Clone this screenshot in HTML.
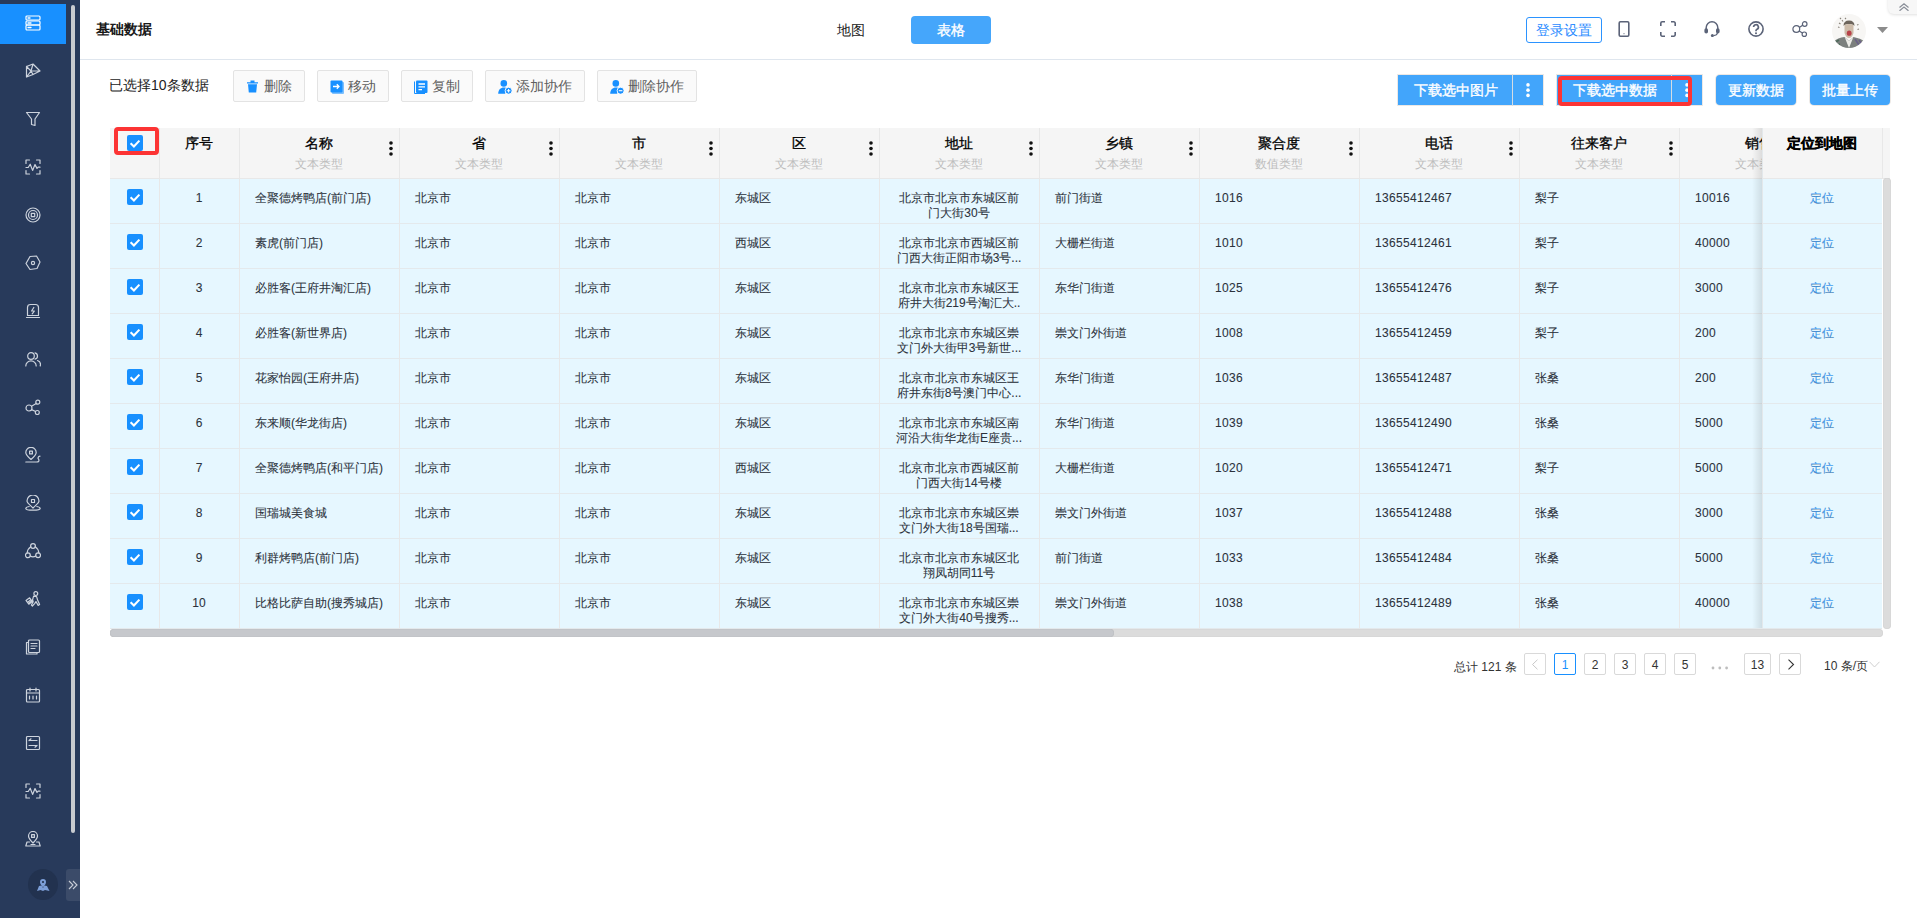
<!DOCTYPE html>
<html><head><meta charset="utf-8">
<style>
*{box-sizing:border-box;margin:0;padding:0}
html,body{width:1917px;height:918px;overflow:hidden;background:#fff}
body{position:relative;font-family:"Liberation Sans",sans-serif;color:#333;font-size:12px}
.a{position:absolute}
#side{position:absolute;left:0;top:0;width:80px;height:918px;background:#283a5b}
#side .act{position:absolute;left:0;top:4px;width:66px;height:40px;background:#1890ff}
#side .sb{position:absolute;left:71px;top:5px;width:4px;height:828px;border-radius:2px;background:#c8cbd0}
#side svg.ic{position:absolute;left:25px;width:16px;height:16px;fill:none;stroke:#c9d0dc;stroke-width:1.2;stroke-linecap:round;stroke-linejoin:round}
#hdr{position:absolute;left:80px;top:0;width:1837px;height:60px;border-bottom:1px solid #dfe6ee;background:#fff}
.title{position:absolute;left:96px;top:20px;font-size:14px;font-weight:bold;color:#1a1a1a;line-height:18px}
.tog1{position:absolute;left:837px;top:21px;font-size:14px;line-height:18px;color:#222}
.tog2{position:absolute;left:911px;top:16px;width:80px;height:28px;background:#45a6fb;border-radius:4px;color:#fff;font-size:14px;line-height:28px;text-align:center;font-weight:500;-webkit-text-stroke:0.35px #fff}
.login{position:absolute;left:1526px;top:17px;width:76px;height:26px;border:1px solid #2b93ff;border-radius:3px;color:#2b8bff;font-size:14px;line-height:24px;text-align:center}
.hic{position:absolute;top:21px;width:16px;height:16px;fill:none;stroke:#5b6378;stroke-width:1.6}
.sel{position:absolute;left:109px;top:76px;font-size:14px;line-height:18px;color:#222}
.tb{position:absolute;top:70px;height:32px;border:1px solid #e3e3e3;border-radius:2px;background:#fafafa;color:#5f5f5f;font-size:14px;line-height:30px}
.tb svg{position:absolute;top:9px;left:12px}
.tb span{position:absolute;top:0}
.bb{position:absolute;top:75px;height:30px;background:#42a5fb;box-shadow:0 0 0 1px rgba(200,190,180,0.35);color:#fff;font-size:14px;line-height:30px;text-align:center;font-weight:500;-webkit-text-stroke:0.35px #fff}
.bb .dv{position:absolute;top:-1px;width:1px;height:32px;background:#d6dde3}
#tbl{position:absolute;left:110px;top:128px;width:1780px;height:510px}
.hd{position:absolute;left:110px;top:128px;width:1780px;height:51px;background:#f5f5f5;border-bottom:1px solid #e8e8e8}
.bd{position:absolute;left:110px;top:179px;width:1772px;height:450px;background:#e6f7ff}
.ht{position:absolute;top:135px;height:16px;font-size:14px;line-height:16px;font-weight:500;text-align:center;color:#000;-webkit-text-stroke:0.3px #000}
.hs{position:absolute;top:156px;height:16px;font-size:12px;line-height:16px;text-align:center;color:#bdbdbd}
.kb{position:absolute;top:141px;width:4px;height:16px;fill:#111}
.kb svg{display:block}
.cb{position:absolute;width:16px;height:16px}
.cb svg{display:block}
.td{position:absolute;padding-top:13px;font-size:12px;line-height:15px;color:#2c323c;white-space:nowrap;-webkit-text-stroke:0.08px #2c323c}
.td.c{text-align:center}
.n{letter-spacing:0.33px}
.td.addr{text-align:center;padding-top:13px}
.loc{color:#40a0f8}
.vl{position:absolute;top:128px;width:1px;height:500px;background:#e8e8e8}
.hl{position:absolute;left:110px;width:1772px;height:1px;background:#e4e9ec}
.fix{position:absolute;left:1762px;top:128px;width:120px;height:500px}
.pg{position:absolute;top:653px;width:22px;height:22px;border:1px solid #d9d9d9;border-radius:2px;font-size:12px;line-height:23px;text-align:center;color:#333;background:#fff}
</style></head><body>
<div id="side">
  <div class="act"></div>
  <div class="sb"></div>
<svg class="ic" viewBox="0 0 16 16" style="top:15px;stroke:#ffffff"><rect x="1" y="1" width="14" height="4" rx="1"/><rect x="1" y="6" width="14" height="4" rx="1"/><rect x="1" y="10" width="14" height="5" rx="1"/><path d="M3 3h2M3 8h3M3 12.5h3" stroke-width="1.3"/></svg>
<svg class="ic" viewBox="0 0 16 16" style="top:63px;stroke:#cdd3dd"><path d="M1.5 3.5 L8 1 L15 8 L8 11.5 L1.5 14 Z M1.5 3.5 L6 8 L15 8 M8 1 L6 8 L1.5 14 M6 8 L8 11.5"/></svg>
<svg class="ic" viewBox="0 0 16 16" style="top:111px;stroke:#cdd3dd"><path d="M1.5 1.5 H14.5 L10 8 V14.5 L6.5 13.5 V8 Z"/></svg>
<svg class="ic" viewBox="0 0 16 16" style="top:159px;stroke:#cdd3dd"><path d="M1 4.5V1h3.5M11.5 1H15v3.5M15 11.5V15h-3.5M4.5 15H1v-3.5M1 8.5H3.2L5.2 5.2L7.6 11.4L10 5.6L12 9.4L13.2 8.2H15"/></svg>
<svg class="ic" viewBox="0 0 16 16" style="top:207px;stroke:#cdd3dd"><circle cx="8" cy="8" r="7"/><circle cx="8" cy="8" r="4.5"/><rect x="6.3" y="6.3" width="3.4" height="3.4"/></svg>
<svg class="ic" viewBox="0 0 16 16" style="top:255px;stroke:#cdd3dd"><path d="M5 1.5 L11.5 1 L15 7 L12 13.5 L5 14.5 L1 8.5 Z"/><circle cx="8" cy="8" r="1.6"/></svg>
<svg class="ic" viewBox="0 0 16 16" style="top:303px;stroke:#cdd3dd"><path d="M2.5 12.5 V4.5 Q2.5 1.5 5.5 1.5 H10.5 Q13.5 1.5 13.5 4.5 V12.5 Z M1.5 14.5 H14.5 M8.8 4.5 L6.6 8 H9.4 L7.2 10.8"/></svg>
<svg class="ic" viewBox="0 0 16 16" style="top:351px;stroke:#cdd3dd"><circle cx="6" cy="5" r="3.3"/><path d="M0.8 15 a5.2 5.2 0 0 1 10.4 0 M10 1.8 a3.3 3.3 0 0 1 0 6.4 M12.5 9.5 a4.5 4.5 0 0 1 2.7 5.5"/></svg>
<svg class="ic" viewBox="0 0 16 16" style="top:399px;stroke:#cdd3dd"><circle cx="4" cy="9" r="3"/><circle cx="12.8" cy="3.2" r="2"/><circle cx="12.3" cy="13.5" r="2"/><path d="M6.5 7.3 L11.2 4.4 M6.6 10.6 L10.6 12.5"/></svg>
<svg class="ic" viewBox="0 0 16 16" style="top:447px;stroke:#cdd3dd"><path d="M6 12.5 C2.5 9.5 0.8 7.5 0.8 5.5 a5.2 5.2 0 0 1 10.4 0 C11.2 7.5 9.5 9.5 6 12.5 Z"/><rect x="4.6" y="4.1" width="2.8" height="2.8"/><path d="M0.8 15 H11.5 C14 15 14.5 13.5 13.5 12.2 C12.6 11 13 9.6 15 9.2"/></svg>
<svg class="ic" viewBox="0 0 16 16" style="top:495px;stroke:#cdd3dd"><path d="M8 13 C5 10 2 7.8 2 6 a6 6 0 0 1 12 0 C14 7.8 11 10 8 13 Z"/><rect x="6.5" y="4.5" width="3" height="3"/><path d="M4.2 11.5 C1.5 12 0.8 12.8 0.8 13.4 C0.8 14.5 4 15.2 8 15.2 C12 15.2 15.2 14.5 15.2 13.4 C15.2 12.8 14.5 12 11.8 11.5"/></svg>
<svg class="ic" viewBox="0 0 16 16" style="top:543px;stroke:#cdd3dd"><circle cx="8" cy="3" r="2.4"/><circle cx="2.9" cy="12.3" r="2.4"/><circle cx="13.1" cy="12.3" r="2.4"/><path d="M5.8 3.8 Q2.6 5.8 2.2 9.9 M10.2 3.8 Q13.4 5.8 13.8 9.9 M5.3 12.9 Q8 14.8 10.7 12.9"/></svg>
<svg class="ic" viewBox="0 0 16 16" style="top:591px;stroke:#cdd3dd"><circle cx="10.8" cy="2.6" r="1.9"/><path d="M8.6 5.2 L11.6 5.6 L12.6 9 L14.6 13.6 L13.2 14.4 L11 10.6 L9.6 12.6 L7.4 15 L6.4 14 L8.2 10.8 L7.6 8.6 Z M1 9.4 L4.6 6.8 L7.4 10.6 L3.8 13.2 Z M2.6 11.4 L5.2 9.2 M3.6 12.4 L6.2 10.2"/></svg>
<svg class="ic" viewBox="0 0 16 16" style="top:639px;stroke:#cdd3dd"><rect x="3.5" y="1" width="11" height="12.5" rx="1"/><path d="M3.5 3.5 H1.5 V15 H12 V13.5 M6 4.5 H12 M6 7 H12 M6 9.5 H10"/></svg>
<svg class="ic" viewBox="0 0 16 16" style="top:687px;stroke:#cdd3dd"><rect x="1.5" y="2.5" width="13" height="12.5" rx="1"/><path d="M1.5 6 H14.5 M5 1 V4 M11 1 V4 M4.5 9 V12 M8 9 V12 M11.5 9 V12"/></svg>
<svg class="ic" viewBox="0 0 16 16" style="top:735px;stroke:#cdd3dd"><rect x="1.5" y="1.5" width="13" height="13" rx="1"/><path d="M4 5.5 H12 M4 5.5 L6 3.8 M12 10.5 H4 M12 10.5 L10 12.2"/></svg>
<svg class="ic" viewBox="0 0 16 16" style="top:783px;stroke:#cdd3dd"><path d="M1 4.5V1h3.5M11.5 1H15v3.5M15 11.5V15h-3.5M4.5 15H1v-3.5M1 8.5H3.2L5.2 5.2L7.6 11.4L10 5.6L12 9.4L13.2 8.2H15"/></svg>
<svg class="ic" viewBox="0 0 16 16" style="top:831px;stroke:#cdd3dd"><path d="M8 12 C5 9 3.5 7.5 3.5 5 a4.5 4.5 0 0 1 9 0 C12.5 7.5 11 9 8 12 Z"/><rect x="6.6" y="3.6" width="2.8" height="2.8"/><path d="M4.5 11 H2 L0.8 15 H15.2 L14 11 H11.5 M6 13.5 H10"/></svg>
<div style="position:absolute;left:28px;top:869px;width:30px;height:31px;border-radius:50%;background:#22324f"></div>
<svg viewBox="0 0 16 16" style="position:absolute;left:35px;top:877px;width:16px;height:16px"><path d="M2 14 L4 9 L6.5 8.5 L8 11 L9.5 8.5 L12 9 L14.5 14 L10 13 L8 14 L5.5 13 Z" fill="#7d9fd8"/><path d="M8 10.5 C6 8 5 6.8 5 5 a3 3 0 0 1 6 0 C11 6.8 10 8 8 10.5 Z" fill="#7d9fd8"/><circle cx="8" cy="5" r="1.1" fill="#22324f"/></svg>
<div style="position:absolute;left:66px;top:869px;width:14px;height:32px;border-radius:3px 0 0 3px;background:#3b4b69"></div>
<svg viewBox="0 0 10 10" style="position:absolute;left:68px;top:880px;width:10px;height:10px;fill:none;stroke:#c9ced8;stroke-width:1.1"><path d="M1 1 L5 5 L1 9 M5 1 L9 5 L5 9"/></svg>
</div>
<div id="hdr"></div>
<div class="title">基础数据</div>
<div class="tog1">地图</div>
<div class="tog2">表格</div>
<div class="login">登录设置</div>
<svg class="hic" viewBox="0 0 16 16" style="left:1616px"><rect x="3.2" y="0.8" width="9.6" height="14.4" rx="1.2"/><path d="M7.6 12.6h0.8" stroke-width="1.4"/></svg>
<svg class="hic" viewBox="0 0 16 16" style="left:1660px"><path d="M0.8 5V2.2a1.4 1.4 0 0 1 1.4-1.4H5M11 0.8h2.8a1.4 1.4 0 0 1 1.4 1.4V5M15.2 11v2.8a1.4 1.4 0 0 1-1.4 1.4H11M5 15.2H2.2a1.4 1.4 0 0 1-1.4-1.4V11"/></svg>
<svg class="hic" viewBox="0 0 16 16" style="left:1704px"><path d="M2.2 9.5V6.6a5.8 5.8 0 0 1 11.6 0v2.9" stroke-width="1.45"/><rect x="0.4" y="7.2" width="3.6" height="5.4" rx="1.8" fill="#5b6378" stroke="none"/><rect x="12" y="7.2" width="3.6" height="5.4" rx="1.8" fill="#5b6378" stroke="none"/><path d="M13.4 12 Q13 14.4 9.6 14.6" stroke-width="1.3"/><circle cx="8.4" cy="14.6" r="1.5" fill="#5b6378" stroke="none"/></svg>
<svg class="hic" viewBox="0 0 16 16" style="left:1748px"><circle cx="8" cy="8" r="7.1"/><path d="M5.6 6.1a2.4 2.4 0 1 1 3.4 2.2c-0.7 0.35-1 0.8-1 1.5v0.4" stroke-width="1.7"/><circle cx="8" cy="12.3" r="1" fill="#5b6378" stroke="none"/></svg>
<svg class="hic" viewBox="0 0 16 16" style="left:1792px;stroke-width:1.2"><circle cx="4.3" cy="8" r="3.4"/><circle cx="12.7" cy="3" r="2.3"/><circle cx="12.3" cy="13.2" r="2.2"/><path d="M7.3 6.5L10.6 4.2M7.1 9.9L10.5 12"/></svg>
<svg class="a" viewBox="0 0 11 6" style="left:1877px;top:27px;width:11px;height:6px"><path d="M0 0H11L5.5 6Z" fill="#8c8c8c"/></svg>
<div class="a" style="left:1888px;top:-4px;width:34px;height:18px;background:#f7f7f7;border-radius:0 0 0 6px;box-shadow:0 1px 3px rgba(0,0,0,0.12)"></div>
<svg class="a" viewBox="0 0 10 8" style="left:1899px;top:2.5px;width:10px;height:8px;fill:none;stroke:#8a8f99;stroke-width:1.25"><path d="M0.5 4.5L5 0.8L9.5 4.5M0.5 7.8L5 4.1L9.5 7.8"/></svg>
<svg class="a" viewBox="0 0 34 34" style="left:1832px;top:14px;width:34px;height:34px"><defs><clipPath id="avc"><circle cx="17" cy="17" r="17"/></clipPath><filter id="blr"><feGaussianBlur stdDeviation="0.6"/></filter></defs>
<g clip-path="url(#avc)"><rect width="34" height="34" fill="#f7f6f4"/><g filter="url(#blr)">
<path d="M7 9 l1.5 1 M10 6 l1 1.5 M8 4 l1 1 M6 13 l1.5 0.5 M25 11 l1.5 -0.5 M27 15 l-1.5 0.5 M13 4 l1 1" stroke="#8a847c" stroke-width="1.1"/>
<path d="M11.5 12 Q11.5 6.5 17 6.5 Q22.5 6.5 22.5 12 L21.5 11 Q17 9 12.5 11 Z" fill="#6d655b"/>
<path d="M12.5 11 Q17 9 21.5 11 L21.5 19 Q20 24 17 24 Q14 24 12.5 19 Z" fill="#cdbcaa"/>
<ellipse cx="17.2" cy="19.2" rx="2.4" ry="2.6" fill="#b8424a"/>
<path d="M0 34 L1 28 Q6 23.5 12.5 23 L17 27 L21.5 23 Q28 24 34 28 V34 Z" fill="#7b807e"/>
<path d="M12.8 23.5 L17 34 L21.2 23.5 L17 27 Z" fill="#ecebe7"/>
<path d="M2 29 l5 -3 M4 32 l4 -2" stroke="#4f6a5c" stroke-width="1.8"/><path d="M23 25 l4 6 M27 26 l3 4" stroke="#6c6288" stroke-width="1.6"/>
</g></g></svg>

<div class="sel">已选择10条数据</div>
<div class="tb" style="left:233px;width:72px"><svg width="13" height="13" viewBox="0 0 13 13"><path d="M1 2.2H12V3.6H1Z M4.5 0.5H8.5V2.2H4.5Z" fill="#1890ff"/><path d="M2 4.2H11L10.2 12.5H2.8Z" fill="#1890ff"/></svg><span style="left:30px">删除</span></div>
<div class="tb" style="left:317px;width:72px"><svg width="14" height="14" viewBox="0 0 14 14"><rect x="2" y="2" width="12" height="12" rx="1" fill="#1890ff" opacity="0.55"/><rect x="0.5" y="0.5" width="12" height="12" rx="1" fill="#1890ff"/><path d="M3 6.5H9M6.8 4.3L9 6.5L6.8 8.7" stroke="#fff" stroke-width="1.3" fill="none"/></svg><span style="left:30px">移动</span></div>
<div class="tb" style="left:401px;width:72px"><svg width="14" height="14" viewBox="0 0 14 14"><path d="M0.5 1.5V13.5H11" stroke="#1890ff" stroke-width="1" fill="none"/><rect x="2" y="0.5" width="11.5" height="12.5" rx="1" fill="#1890ff"/><path d="M4.5 4H11M4.5 6.8H11M4.5 9.6H8" stroke="#fff" stroke-width="1.3"/></svg><span style="left:30px">复制</span></div>
<div class="tb" style="left:485px;width:100px"><svg width="14" height="14" viewBox="0 0 14 14"><circle cx="5.8" cy="3.4" r="3.3" fill="#1890ff"/><path d="M0.2 13.8C0.2 9.6 2.8 7.4 5.8 7.4C7.3 7.4 8.4 7.8 9.2 8.3C7.7 9.2 7 10.8 7.2 13.8Z" fill="#1890ff"/><circle cx="10.6" cy="10.7" r="3.5" fill="#1890ff" stroke="#fff" stroke-width="0.9"/><path d="M8.8 10.7H12.4M10.6 8.9V12.5" stroke="#fff" stroke-width="1.1"/></svg><span style="left:30px">添加协作</span></div>
<div class="tb" style="left:597px;width:100px"><svg width="14" height="14" viewBox="0 0 14 14"><circle cx="5.8" cy="3.4" r="3.3" fill="#1890ff"/><path d="M0.2 13.8C0.2 9.6 2.8 7.4 5.8 7.4C7.3 7.4 8.4 7.8 9.2 8.3C7.7 9.2 7 10.8 7.2 13.8Z" fill="#1890ff"/><circle cx="10.6" cy="10.7" r="3.5" fill="#1890ff" stroke="#fff" stroke-width="0.9"/><path d="M8.8 10.7H12.4" stroke="#fff" stroke-width="1.1"/></svg><span style="left:30px">删除协作</span></div>

<div class="bb" style="left:1398px;width:145px"><span class="a" style="left:16px;top:0">下载选中图片</span><div class="dv" style="left:114px"></div><svg class="a" viewBox="0 0 4 16" style="left:128px;top:8px;width:4px;height:15px"><circle cx="2" cy="2" r="1.9" fill="#fff"/><circle cx="2" cy="7.6" r="1.9" fill="#fff"/><circle cx="2" cy="13.2" r="1.9" fill="#fff"/></svg></div>
<div class="bb" style="left:1557px;width:145px"><span class="a" style="left:16px;top:0">下载选中数据</span><div class="dv" style="left:114px"></div><svg class="a" viewBox="0 0 4 16" style="left:128px;top:8px;width:4px;height:15px"><circle cx="2" cy="2" r="1.9" fill="#fff"/><circle cx="2" cy="7.6" r="1.9" fill="#fff"/><circle cx="2" cy="13.2" r="1.9" fill="#fff"/></svg></div>
<div class="bb" style="left:1716px;width:80px;border-radius:4px">更新数据</div>
<div class="bb" style="left:1810px;width:80px;border-radius:4px">批量上传</div>
<div class="a" style="left:1558px;top:76px;width:134px;height:30px;border:4px solid #fc3434;border-radius:4px"></div>

<div class="hd"></div>
<div class="bd"></div>
<div class="vl" style="left:159px"></div>
<div class="vl" style="left:239px"></div>
<div class="vl" style="left:399px"></div>
<div class="vl" style="left:559px"></div>
<div class="vl" style="left:719px"></div>
<div class="vl" style="left:879px"></div>
<div class="vl" style="left:1039px"></div>
<div class="vl" style="left:1199px"></div>
<div class="vl" style="left:1359px"></div>
<div class="vl" style="left:1519px"></div>
<div class="vl" style="left:1679px"></div>
<div class="hl" style="top:223px"></div>
<div class="hl" style="top:268px"></div>
<div class="hl" style="top:313px"></div>
<div class="hl" style="top:358px"></div>
<div class="hl" style="top:403px"></div>
<div class="hl" style="top:448px"></div>
<div class="hl" style="top:493px"></div>
<div class="hl" style="top:538px"></div>
<div class="hl" style="top:583px"></div>
<div class="hl" style="top:628px"></div>
<div class="cb" style="left:127px;top:135px"><svg width="16" height="16" viewBox="0 0 16 16"><rect x="0" y="0" width="16" height="16" rx="2" fill="#1890ff"/><path d="M3.6 8.3 L6.9 11.4 L12.4 5.6" stroke="#fff" stroke-width="2.1" fill="none" stroke-linecap="butt" stroke-linejoin="miter"/></svg></div>
<div class="ht" style="left:159px;width:80px">序号</div>
<div class="ht" style="left:239px;width:160px">名称</div>
<div class="hs" style="left:239px;width:160px">文本类型</div>
<div class="kb" style="left:389px"><svg width="4" height="16" viewBox="0 0 4 16"><circle cx="2" cy="2" r="1.8"/><circle cx="2" cy="7.5" r="1.8"/><circle cx="2" cy="13" r="1.8"/></svg></div>
<div class="ht" style="left:399px;width:160px">省</div>
<div class="hs" style="left:399px;width:160px">文本类型</div>
<div class="kb" style="left:549px"><svg width="4" height="16" viewBox="0 0 4 16"><circle cx="2" cy="2" r="1.8"/><circle cx="2" cy="7.5" r="1.8"/><circle cx="2" cy="13" r="1.8"/></svg></div>
<div class="ht" style="left:559px;width:160px">市</div>
<div class="hs" style="left:559px;width:160px">文本类型</div>
<div class="kb" style="left:709px"><svg width="4" height="16" viewBox="0 0 4 16"><circle cx="2" cy="2" r="1.8"/><circle cx="2" cy="7.5" r="1.8"/><circle cx="2" cy="13" r="1.8"/></svg></div>
<div class="ht" style="left:719px;width:160px">区</div>
<div class="hs" style="left:719px;width:160px">文本类型</div>
<div class="kb" style="left:869px"><svg width="4" height="16" viewBox="0 0 4 16"><circle cx="2" cy="2" r="1.8"/><circle cx="2" cy="7.5" r="1.8"/><circle cx="2" cy="13" r="1.8"/></svg></div>
<div class="ht" style="left:879px;width:160px">地址</div>
<div class="hs" style="left:879px;width:160px">文本类型</div>
<div class="kb" style="left:1029px"><svg width="4" height="16" viewBox="0 0 4 16"><circle cx="2" cy="2" r="1.8"/><circle cx="2" cy="7.5" r="1.8"/><circle cx="2" cy="13" r="1.8"/></svg></div>
<div class="ht" style="left:1039px;width:160px">乡镇</div>
<div class="hs" style="left:1039px;width:160px">文本类型</div>
<div class="kb" style="left:1189px"><svg width="4" height="16" viewBox="0 0 4 16"><circle cx="2" cy="2" r="1.8"/><circle cx="2" cy="7.5" r="1.8"/><circle cx="2" cy="13" r="1.8"/></svg></div>
<div class="ht" style="left:1199px;width:160px">聚合度</div>
<div class="hs" style="left:1199px;width:160px">数值类型</div>
<div class="kb" style="left:1349px"><svg width="4" height="16" viewBox="0 0 4 16"><circle cx="2" cy="2" r="1.8"/><circle cx="2" cy="7.5" r="1.8"/><circle cx="2" cy="13" r="1.8"/></svg></div>
<div class="ht" style="left:1359px;width:160px">电话</div>
<div class="hs" style="left:1359px;width:160px">文本类型</div>
<div class="kb" style="left:1509px"><svg width="4" height="16" viewBox="0 0 4 16"><circle cx="2" cy="2" r="1.8"/><circle cx="2" cy="7.5" r="1.8"/><circle cx="2" cy="13" r="1.8"/></svg></div>
<div class="ht" style="left:1519px;width:160px">往来客户</div>
<div class="hs" style="left:1519px;width:160px">文本类型</div>
<div class="kb" style="left:1669px"><svg width="4" height="16" viewBox="0 0 4 16"><circle cx="2" cy="2" r="1.8"/><circle cx="2" cy="7.5" r="1.8"/><circle cx="2" cy="13" r="1.8"/></svg></div>
<div class="ht" style="left:1679px;width:160px">销售</div>
<div class="hs" style="left:1679px;width:160px">文本类型</div>
<div class="kb" style="left:1829px"><svg width="4" height="16" viewBox="0 0 4 16"><circle cx="2" cy="2" r="1.8"/><circle cx="2" cy="7.5" r="1.8"/><circle cx="2" cy="13" r="1.8"/></svg></div>
<div class="cb" style="left:127px;top:189px"><svg width="16" height="16" viewBox="0 0 16 16"><rect x="0" y="0" width="16" height="16" rx="2" fill="#1890ff"/><path d="M3.6 8.3 L6.9 11.4 L12.4 5.6" stroke="#fff" stroke-width="2.1" fill="none" stroke-linecap="butt" stroke-linejoin="miter"/></svg></div>
<div class="td c" style="left:159px;width:80px;top:178px">1</div>
<div class="td" style="left:255px;top:178px">全聚德烤鸭店(前门店)</div>
<div class="td" style="left:415px;top:178px">北京市</div>
<div class="td" style="left:575px;top:178px">北京市</div>
<div class="td" style="left:735px;top:178px">东城区</div>
<div class="td addr" style="left:879px;width:160px;top:178px">北京市北京市东城区前<br>门大街30号</div>
<div class="td" style="left:1055px;top:178px">前门街道</div>
<div class="td n" style="left:1215px;top:178px">1016</div>
<div class="td n" style="left:1375px;top:178px">13655412467</div>
<div class="td" style="left:1535px;top:178px">梨子</div>
<div class="td n" style="left:1695px;top:178px">10016</div>
<div class="cb" style="left:127px;top:234px"><svg width="16" height="16" viewBox="0 0 16 16"><rect x="0" y="0" width="16" height="16" rx="2" fill="#1890ff"/><path d="M3.6 8.3 L6.9 11.4 L12.4 5.6" stroke="#fff" stroke-width="2.1" fill="none" stroke-linecap="butt" stroke-linejoin="miter"/></svg></div>
<div class="td c" style="left:159px;width:80px;top:223px">2</div>
<div class="td" style="left:255px;top:223px">素虎(前门店)</div>
<div class="td" style="left:415px;top:223px">北京市</div>
<div class="td" style="left:575px;top:223px">北京市</div>
<div class="td" style="left:735px;top:223px">西城区</div>
<div class="td addr" style="left:879px;width:160px;top:223px">北京市北京市西城区前<br>门西大街正阳市场3号...</div>
<div class="td" style="left:1055px;top:223px">大栅栏街道</div>
<div class="td n" style="left:1215px;top:223px">1010</div>
<div class="td n" style="left:1375px;top:223px">13655412461</div>
<div class="td" style="left:1535px;top:223px">梨子</div>
<div class="td n" style="left:1695px;top:223px">40000</div>
<div class="cb" style="left:127px;top:279px"><svg width="16" height="16" viewBox="0 0 16 16"><rect x="0" y="0" width="16" height="16" rx="2" fill="#1890ff"/><path d="M3.6 8.3 L6.9 11.4 L12.4 5.6" stroke="#fff" stroke-width="2.1" fill="none" stroke-linecap="butt" stroke-linejoin="miter"/></svg></div>
<div class="td c" style="left:159px;width:80px;top:268px">3</div>
<div class="td" style="left:255px;top:268px">必胜客(王府井淘汇店)</div>
<div class="td" style="left:415px;top:268px">北京市</div>
<div class="td" style="left:575px;top:268px">北京市</div>
<div class="td" style="left:735px;top:268px">东城区</div>
<div class="td addr" style="left:879px;width:160px;top:268px">北京市北京市东城区王<br>府井大街219号淘汇大..</div>
<div class="td" style="left:1055px;top:268px">东华门街道</div>
<div class="td n" style="left:1215px;top:268px">1025</div>
<div class="td n" style="left:1375px;top:268px">13655412476</div>
<div class="td" style="left:1535px;top:268px">梨子</div>
<div class="td n" style="left:1695px;top:268px">3000</div>
<div class="cb" style="left:127px;top:324px"><svg width="16" height="16" viewBox="0 0 16 16"><rect x="0" y="0" width="16" height="16" rx="2" fill="#1890ff"/><path d="M3.6 8.3 L6.9 11.4 L12.4 5.6" stroke="#fff" stroke-width="2.1" fill="none" stroke-linecap="butt" stroke-linejoin="miter"/></svg></div>
<div class="td c" style="left:159px;width:80px;top:313px">4</div>
<div class="td" style="left:255px;top:313px">必胜客(新世界店)</div>
<div class="td" style="left:415px;top:313px">北京市</div>
<div class="td" style="left:575px;top:313px">北京市</div>
<div class="td" style="left:735px;top:313px">东城区</div>
<div class="td addr" style="left:879px;width:160px;top:313px">北京市北京市东城区崇<br>文门外大街甲3号新世...</div>
<div class="td" style="left:1055px;top:313px">崇文门外街道</div>
<div class="td n" style="left:1215px;top:313px">1008</div>
<div class="td n" style="left:1375px;top:313px">13655412459</div>
<div class="td" style="left:1535px;top:313px">梨子</div>
<div class="td n" style="left:1695px;top:313px">200</div>
<div class="cb" style="left:127px;top:369px"><svg width="16" height="16" viewBox="0 0 16 16"><rect x="0" y="0" width="16" height="16" rx="2" fill="#1890ff"/><path d="M3.6 8.3 L6.9 11.4 L12.4 5.6" stroke="#fff" stroke-width="2.1" fill="none" stroke-linecap="butt" stroke-linejoin="miter"/></svg></div>
<div class="td c" style="left:159px;width:80px;top:358px">5</div>
<div class="td" style="left:255px;top:358px">花家怡园(王府井店)</div>
<div class="td" style="left:415px;top:358px">北京市</div>
<div class="td" style="left:575px;top:358px">北京市</div>
<div class="td" style="left:735px;top:358px">东城区</div>
<div class="td addr" style="left:879px;width:160px;top:358px">北京市北京市东城区王<br>府井东街8号澳门中心...</div>
<div class="td" style="left:1055px;top:358px">东华门街道</div>
<div class="td n" style="left:1215px;top:358px">1036</div>
<div class="td n" style="left:1375px;top:358px">13655412487</div>
<div class="td" style="left:1535px;top:358px">张桑</div>
<div class="td n" style="left:1695px;top:358px">200</div>
<div class="cb" style="left:127px;top:414px"><svg width="16" height="16" viewBox="0 0 16 16"><rect x="0" y="0" width="16" height="16" rx="2" fill="#1890ff"/><path d="M3.6 8.3 L6.9 11.4 L12.4 5.6" stroke="#fff" stroke-width="2.1" fill="none" stroke-linecap="butt" stroke-linejoin="miter"/></svg></div>
<div class="td c" style="left:159px;width:80px;top:403px">6</div>
<div class="td" style="left:255px;top:403px">东来顺(华龙街店)</div>
<div class="td" style="left:415px;top:403px">北京市</div>
<div class="td" style="left:575px;top:403px">北京市</div>
<div class="td" style="left:735px;top:403px">东城区</div>
<div class="td addr" style="left:879px;width:160px;top:403px">北京市北京市东城区南<br>河沿大街华龙街E座贵...</div>
<div class="td" style="left:1055px;top:403px">东华门街道</div>
<div class="td n" style="left:1215px;top:403px">1039</div>
<div class="td n" style="left:1375px;top:403px">13655412490</div>
<div class="td" style="left:1535px;top:403px">张桑</div>
<div class="td n" style="left:1695px;top:403px">5000</div>
<div class="cb" style="left:127px;top:459px"><svg width="16" height="16" viewBox="0 0 16 16"><rect x="0" y="0" width="16" height="16" rx="2" fill="#1890ff"/><path d="M3.6 8.3 L6.9 11.4 L12.4 5.6" stroke="#fff" stroke-width="2.1" fill="none" stroke-linecap="butt" stroke-linejoin="miter"/></svg></div>
<div class="td c" style="left:159px;width:80px;top:448px">7</div>
<div class="td" style="left:255px;top:448px">全聚德烤鸭店(和平门店)</div>
<div class="td" style="left:415px;top:448px">北京市</div>
<div class="td" style="left:575px;top:448px">北京市</div>
<div class="td" style="left:735px;top:448px">西城区</div>
<div class="td addr" style="left:879px;width:160px;top:448px">北京市北京市西城区前<br>门西大街14号楼</div>
<div class="td" style="left:1055px;top:448px">大栅栏街道</div>
<div class="td n" style="left:1215px;top:448px">1020</div>
<div class="td n" style="left:1375px;top:448px">13655412471</div>
<div class="td" style="left:1535px;top:448px">梨子</div>
<div class="td n" style="left:1695px;top:448px">5000</div>
<div class="cb" style="left:127px;top:504px"><svg width="16" height="16" viewBox="0 0 16 16"><rect x="0" y="0" width="16" height="16" rx="2" fill="#1890ff"/><path d="M3.6 8.3 L6.9 11.4 L12.4 5.6" stroke="#fff" stroke-width="2.1" fill="none" stroke-linecap="butt" stroke-linejoin="miter"/></svg></div>
<div class="td c" style="left:159px;width:80px;top:493px">8</div>
<div class="td" style="left:255px;top:493px">国瑞城美食城</div>
<div class="td" style="left:415px;top:493px">北京市</div>
<div class="td" style="left:575px;top:493px">北京市</div>
<div class="td" style="left:735px;top:493px">东城区</div>
<div class="td addr" style="left:879px;width:160px;top:493px">北京市北京市东城区崇<br>文门外大街18号国瑞...</div>
<div class="td" style="left:1055px;top:493px">崇文门外街道</div>
<div class="td n" style="left:1215px;top:493px">1037</div>
<div class="td n" style="left:1375px;top:493px">13655412488</div>
<div class="td" style="left:1535px;top:493px">张桑</div>
<div class="td n" style="left:1695px;top:493px">3000</div>
<div class="cb" style="left:127px;top:549px"><svg width="16" height="16" viewBox="0 0 16 16"><rect x="0" y="0" width="16" height="16" rx="2" fill="#1890ff"/><path d="M3.6 8.3 L6.9 11.4 L12.4 5.6" stroke="#fff" stroke-width="2.1" fill="none" stroke-linecap="butt" stroke-linejoin="miter"/></svg></div>
<div class="td c" style="left:159px;width:80px;top:538px">9</div>
<div class="td" style="left:255px;top:538px">利群烤鸭店(前门店)</div>
<div class="td" style="left:415px;top:538px">北京市</div>
<div class="td" style="left:575px;top:538px">北京市</div>
<div class="td" style="left:735px;top:538px">东城区</div>
<div class="td addr" style="left:879px;width:160px;top:538px">北京市北京市东城区北<br>翔凤胡同11号</div>
<div class="td" style="left:1055px;top:538px">前门街道</div>
<div class="td n" style="left:1215px;top:538px">1033</div>
<div class="td n" style="left:1375px;top:538px">13655412484</div>
<div class="td" style="left:1535px;top:538px">张桑</div>
<div class="td n" style="left:1695px;top:538px">5000</div>
<div class="cb" style="left:127px;top:594px"><svg width="16" height="16" viewBox="0 0 16 16"><rect x="0" y="0" width="16" height="16" rx="2" fill="#1890ff"/><path d="M3.6 8.3 L6.9 11.4 L12.4 5.6" stroke="#fff" stroke-width="2.1" fill="none" stroke-linecap="butt" stroke-linejoin="miter"/></svg></div>
<div class="td c" style="left:159px;width:80px;top:583px">10</div>
<div class="td" style="left:255px;top:583px">比格比萨自助(搜秀城店)</div>
<div class="td" style="left:415px;top:583px">北京市</div>
<div class="td" style="left:575px;top:583px">北京市</div>
<div class="td" style="left:735px;top:583px">东城区</div>
<div class="td addr" style="left:879px;width:160px;top:583px">北京市北京市东城区崇<br>文门外大街40号搜秀...</div>
<div class="td" style="left:1055px;top:583px">崇文门外街道</div>
<div class="td n" style="left:1215px;top:583px">1038</div>
<div class="td n" style="left:1375px;top:583px">13655412489</div>
<div class="td" style="left:1535px;top:583px">张桑</div>
<div class="td n" style="left:1695px;top:583px">40000</div>
<!-- fixed col -->
<div class="a" style="left:1752px;top:128px;width:10px;height:500px;background:linear-gradient(to right,rgba(0,0,0,0),rgba(0,0,0,0.1))"></div>
<div class="a" style="left:1762px;top:128px;width:128px;height:51px;background:#f5f5f5;border-bottom:1px solid #e8e8e8"></div>
<div class="a" style="left:1762px;top:179px;width:120px;height:449px;background:#e6f7ff"></div><div class="a" style="left:1762px;top:128px;width:1px;height:500px;background:#e3e8eb"></div>
<div class="td c loc" style="left:1762px;width:120px;top:178px">定位</div>
<div class="a" style="left:1762px;width:120px;top:223px;height:1px;background:#e4e9ec"></div>
<div class="td c loc" style="left:1762px;width:120px;top:223px">定位</div>
<div class="a" style="left:1762px;width:120px;top:268px;height:1px;background:#e4e9ec"></div>
<div class="td c loc" style="left:1762px;width:120px;top:268px">定位</div>
<div class="a" style="left:1762px;width:120px;top:313px;height:1px;background:#e4e9ec"></div>
<div class="td c loc" style="left:1762px;width:120px;top:313px">定位</div>
<div class="a" style="left:1762px;width:120px;top:358px;height:1px;background:#e4e9ec"></div>
<div class="td c loc" style="left:1762px;width:120px;top:358px">定位</div>
<div class="a" style="left:1762px;width:120px;top:403px;height:1px;background:#e4e9ec"></div>
<div class="td c loc" style="left:1762px;width:120px;top:403px">定位</div>
<div class="a" style="left:1762px;width:120px;top:448px;height:1px;background:#e4e9ec"></div>
<div class="td c loc" style="left:1762px;width:120px;top:448px">定位</div>
<div class="a" style="left:1762px;width:120px;top:493px;height:1px;background:#e4e9ec"></div>
<div class="td c loc" style="left:1762px;width:120px;top:493px">定位</div>
<div class="a" style="left:1762px;width:120px;top:538px;height:1px;background:#e4e9ec"></div>
<div class="td c loc" style="left:1762px;width:120px;top:538px">定位</div>
<div class="a" style="left:1762px;width:120px;top:583px;height:1px;background:#e4e9ec"></div>
<div class="td c loc" style="left:1762px;width:120px;top:583px">定位</div>
<div class="a" style="left:1762px;width:120px;top:628px;height:1px;background:#e4e9ec"></div>
<div class="ht" style="left:1762px;width:120px;font-weight:bold">定位到地图</div>
<div class="a" style="left:1882px;top:128px;width:1px;height:50px;background:#e8e8e8"></div>
<!-- v scrollbar -->
<div class="a" style="left:1883px;top:178px;width:8px;height:451px;background:#dcdcdc;border-radius:4px;box-shadow:inset 0 0 1px rgba(0,0,0,0.18)"></div>
<!-- h scrollbar -->
<div class="a" style="left:110px;top:629px;width:1773px;height:8px;background:#dcdcdc;border-radius:4px;box-shadow:inset 0 0 1px rgba(0,0,0,0.18)"></div>
<div class="a" style="left:110px;top:629px;width:1004px;height:8px;background:#c6c8cc;border-radius:4px;box-shadow:inset 0 0 1px rgba(0,0,0,0.2)"></div>
<div class="a" style="left:114px;top:127px;width:45px;height:28px;border:4px solid #fc3434;border-radius:4px"></div>

<div class="a" style="left:1454px;top:659px;font-size:12px;line-height:16px;color:#333">总计 121 条</div>
<div class="pg" style="left:1524px"><svg width="8" height="11" viewBox="0 0 8 11" style="position:absolute;left:6px;top:5px"><path d="M6.5 0.7L1.5 5.5L6.5 10.3" stroke="#c8c8c8" stroke-width="1" fill="none"/></svg></div>
<div class="pg" style="left:1554px;border-color:#1890ff;color:#1890ff">1</div>
<div class="pg" style="left:1584px">2</div>
<div class="pg" style="left:1614px">3</div>
<div class="pg" style="left:1644px">4</div>
<div class="pg" style="left:1674px">5</div>
<svg class="a" width="18" height="4" viewBox="0 0 18 4" style="left:1711px;top:666px"><circle cx="2" cy="2" r="1.4" fill="#bdbdbd"/><circle cx="8.8" cy="2" r="1.4" fill="#bdbdbd"/><circle cx="15.6" cy="2" r="1.4" fill="#bdbdbd"/></svg>
<div class="pg" style="left:1744px;width:27px">13</div>
<div class="pg" style="left:1779px"><svg width="8" height="11" viewBox="0 0 8 11" style="position:absolute;left:7px;top:5px"><path d="M1.5 0.7L6.5 5.5L1.5 10.3" stroke="#333" stroke-width="1.1" fill="none"/></svg></div>
<div class="a" style="left:1824px;top:658px;font-size:12px;line-height:16px;color:#333">10 条/页</div><svg class="a" width="11" height="7" viewBox="0 0 11 7" style="left:1869px;top:661px"><path d="M0.5 0.8L5.5 6L10.5 0.8" stroke="#cfcfcf" stroke-width="1" fill="none"/></svg>
</body></html>
